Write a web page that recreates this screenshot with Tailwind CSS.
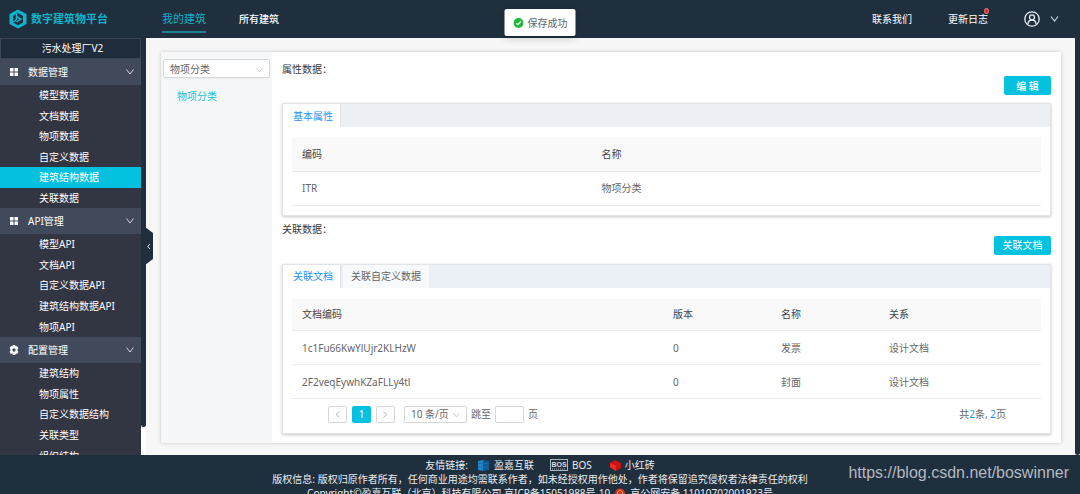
<!DOCTYPE html>
<html lang="zh-CN">
<head>
<meta charset="utf-8">
<meta name="viewport" content="width=device-width, initial-scale=1">
<title>数字建筑物平台</title>
<script src="https://cdn.jsdelivr.net/npm/@tailwindcss/browser@4"></script>
</head>
<body class="relative flex h-screen flex-col overflow-hidden bg-[#f7f7f8] font-['Noto_Sans','Noto_Sans_CJK_SC',sans-serif] text-[10px] leading-[14px] text-[#666]">

<header class="flex h-[38px] shrink-0 items-center bg-[#1f2f3e] text-white">
  <a href="#" class="flex w-[162px] items-center gap-1 pl-[9px] text-[11px] font-bold text-[#12b2cb]">
    <svg class="h-5 w-[18px]" viewBox="0 0 18 20" aria-hidden="true">
      <path d="M9 0.5 17.5 5v10L9 19.5 0.500 15V5Z" fill="#12b2cb"/>
      <path d="M9 4 14 7v6.500L9 16.300 4 13.500V7Z" fill="#1f2f3e"/>
      <path d="M7.500 4.500v6L4.500 13M7.500 7.500 12 10 7.500 13" fill="none" stroke="#12b2cb" stroke-width="1.500"/>
    </svg>
    <span class="whitespace-nowrap">数字建筑物平台</span>
  </a>
  <nav class="flex h-full items-center gap-[33px]">
    <a href="#" class="mt-[2px] flex h-[26px] items-center border-b-2 border-[#1c8196] text-[11px] text-[#18aec4]">我的建筑</a>
    <a href="#" class="font-medium">所有建筑</a>
  </nav>
  <div class="ml-auto flex items-center pr-[21px]">
    <a href="#">联系我们</a>
    <a href="#" class="relative ml-9">更新日志
      <span class="absolute -right-px -top-1 h-[6px] w-[5px] rounded-full border border-[#f2786f] bg-[#c2383a]"></span>
    </a>
    <button type="button" class="ml-9 flex items-center gap-[10px]" aria-label="用户菜单">
      <svg class="size-4" viewBox="0 0 16 16" fill="none" stroke="#e8edf2" stroke-width="1.300" aria-hidden="true">
        <circle cx="8" cy="8" r="7.200"/><circle cx="8" cy="6.300" r="2.500"/>
        <path d="M4 13c.2-2.500 1.700-4 4-4s3.800 1.500 4 4"/>
      </svg>
      <svg class="h-2 w-[9px]" viewBox="0 0 9 8" fill="none" stroke="#cfd6dc" stroke-width="1.200" aria-hidden="true"><path d="M1 1.500 4.500 6 8 1.500"/></svg>
    </button>
  </div>
</header>

<div class="flex min-h-0 flex-1">
  <aside class="relative flex w-[146px] shrink-0 bg-white">
    <div class="absolute bottom-7 right-0 top-0 w-[5px] rounded-b bg-[#1f2f3e]"></div>
    <div class="relative w-[141px] overflow-hidden bg-[#323643] text-white">
      <div class="flex h-[21px] items-center justify-center border border-[#3a4452] bg-[#1f2c3b] pb-[2px] pl-1">污水处理厂V2</div>

      <button type="button" class="flex h-[26px] w-full items-center bg-[#414a5b] pl-[10px] pr-[7px]">
        <svg class="mr-[10px] size-2" viewBox="0 0 8 8" fill="#fff" aria-hidden="true"><path d="M0 0h3.500v3.500H0zM4.500 0H8v3.500H4.500zM0 4.500h3.500V8H0zM4.500 4.500H8V8H4.500z"/></svg>
        数据管理
        <svg class="ml-auto h-2 w-2" viewBox="0 0 8 8" fill="none" stroke="#cfd6dc" aria-hidden="true"><path d="M.500 1.500 4 6 7.500 1.500"/></svg>
      </button>
      <ul class="grid h-[123px] auto-rows-fr">
        <li class="grid"><a href="#" class="flex items-center pl-[39px]">模型数据</a></li>
        <li class="grid"><a href="#" class="flex items-center pl-[39px]">文档数据</a></li>
        <li class="grid"><a href="#" class="flex items-center pl-[39px]">物项数据</a></li>
        <li class="grid"><a href="#" class="flex items-center pl-[39px]">自定义数据</a></li>
        <li class="grid"><a href="#" class="flex items-center bg-[#04c2df] pl-[39px]">建筑结构数据</a></li>
        <li class="grid"><a href="#" class="flex items-center pl-[39px]">关联数据</a></li>
      </ul>

      <button type="button" class="flex h-[26px] w-full items-center bg-[#414a5b] pl-[10px] pr-[7px]">
        <svg class="mr-[10px] size-2" viewBox="0 0 8 8" fill="#fff" aria-hidden="true"><path d="M0 0h3.500v3.500H0zM4.500 0H8v3.500H4.500zM0 4.500h3.500V8H0zM4.500 4.500H8V8H4.500z"/></svg>
        API管理
        <svg class="ml-auto h-2 w-2" viewBox="0 0 8 8" fill="none" stroke="#cfd6dc" aria-hidden="true"><path d="M.500 1.500 4 6 7.500 1.500"/></svg>
      </button>
      <ul class="grid h-[103px] auto-rows-fr">
        <li class="grid"><a href="#" class="flex items-center pl-[39px]">模型API</a></li>
        <li class="grid"><a href="#" class="flex items-center pl-[39px]">文档API</a></li>
        <li class="grid"><a href="#" class="flex items-center pl-[39px]">自定义数据API</a></li>
        <li class="grid"><a href="#" class="flex items-center pl-[39px]">建筑结构数据API</a></li>
        <li class="grid"><a href="#" class="flex items-center pl-[39px]">物项API</a></li>
      </ul>

      <button type="button" class="flex h-[26px] w-full items-center bg-[#414a5b] pl-[9px] pr-[7px]">
        <svg class="mr-[9px] size-[10px]" viewBox="0 0 10 10" aria-hidden="true">
          <path fill="#fff" fill-rule="evenodd" d="M3.800 0h2.400l.4 1.400 1.400-.4 1.400 2L8.600 4.200v1.600L9.400 7 8 9l-1.400-.4L6.200 10H3.800l-.4-1.400L2 9 .600 7l.8-1.200V4.200L.600 3 2 1l1.400.4ZM5 3.300a1.700 1.700 0 1 0 0 3.400 1.700 1.700 0 0 0 0-3.400Z"/>
        </svg>
        配置管理
        <svg class="ml-auto h-2 w-2" viewBox="0 0 8 8" fill="none" stroke="#cfd6dc" aria-hidden="true"><path d="M.500 1.500 4 6 7.500 1.500"/></svg>
      </button>
      <ul class="grid h-[103px] auto-rows-fr">
        <li class="grid"><a href="#" class="flex items-center pl-[39px]">建筑结构</a></li>
        <li class="grid"><a href="#" class="flex items-center pl-[39px]">物项属性</a></li>
        <li class="grid"><a href="#" class="flex items-center pl-[39px]">自定义数据结构</a></li>
        <li class="grid"><a href="#" class="flex items-center pl-[39px]">关联类型</a></li>
        <li class="grid"><a href="#" class="flex items-center pl-[39px]">组织结构</a></li>
      </ul>
    </div>
    <button type="button" aria-label="收起侧栏" class="absolute -right-[7px] top-[189px] h-[38px] w-[8px]">
      <svg class="h-[38px] w-[8px]" viewBox="0 0 8 38" aria-hidden="true"><path d="M0 0 8 6v26L0 38Z" fill="#1f2f3e"/><path d="M4.800 17 2.800 19.500l2 2.500" fill="none" stroke="#dfe5ea"/></svg>
    </button>
  </aside>

  <main class="flex min-w-0 flex-1 pb-3 pl-[15px] pr-[14px] pt-[14px]">
    <div class="flex min-w-0 flex-1 bg-white shadow-[0_0_4px_rgba(0,0,0,0.2)]">
      <section class="w-[111px] shrink-0 bg-[#f6f7f9] px-[2px] pt-[7px]">
        <div class="relative">
          <select aria-label="分类" class="block h-[19px] w-full appearance-none rounded-xs border border-[#d5d7da] bg-white pl-[6px] text-[10px] leading-[14px] shadow-xs"><option>物项分类</option></select>
          <svg class="pointer-events-none absolute right-[7px] top-[8px] h-[6px] w-[7px]" viewBox="0 0 7 6" fill="none" stroke="#ccc" aria-hidden="true"><path d="M.500 1 3.500 5 6.500 1"/></svg>
        </div>
        <a href="#" class="mt-[11px] block pl-[14px] text-[#17bdd6]">物项分类</a>
      </section>

      <section class="min-w-0 flex-1 pl-[10px] pr-[10px] pt-[10px]">
        <h2 class="text-[#33383f]">属性数据：</h2>
        <div class="flex justify-end">
          <button type="button" class="h-[19px] w-[47px] rounded-xs bg-[#04c2df] font-medium text-white">编 辑</button>
        </div>
        <div class="mt-2 border border-[#e2e4e8] bg-white pb-[9px] shadow-[0_1px_3px_rgba(0,0,0,0.22)]">
          <div class="flex h-[23px] bg-[#eceff4]">
            <button type="button" class="border-r border-[#dfe2e7] bg-white pl-[10px] pr-[7px] text-[#1f90ee]">基本属性</button>
          </div>
          <div class="px-[9px] pt-[10px]">
            <table class="w-full table-fixed text-left">
              <thead class="bg-[#f9f9fa] text-[#444]">
                <tr class="h-[34px] border-b border-[#e9ebee]"><th class="w-2/5 pl-[10px] font-normal">编码</th><th class="w-3/5 pl-[10px] font-normal">名称</th></tr>
              </thead>
              <tbody>
                <tr class="h-[34px] border-b border-[#e9ebee]"><td class="pl-[10px]">ITR</td><td class="pl-[10px]">物项分类</td></tr>
              </tbody>
            </table>
          </div>
        </div>

        <h2 class="mt-[6px] text-[#33383f]">关联数据：</h2>
        <div class="flex justify-end">
          <button type="button" class="h-[19px] w-[57px] rounded-xs bg-[#04c2df] text-white">关联文档</button>
        </div>
        <div class="mt-[9px] border border-[#e2e4e8] bg-white shadow-[0_1px_3px_rgba(0,0,0,0.22)]">
          <div class="flex h-[23px] gap-[2px] bg-[#ebeff6]">
            <button type="button" class="border-r border-[#dfe2e7] bg-white pl-[10px] pr-[7px] text-[#1f90ee]">关联文档</button>
            <button type="button" class="bg-[#f8f9fb] px-[8px]">关联自定义数据</button>
          </div>
          <div class="px-[9px] pt-[11px]">
            <table class="w-full table-fixed text-left">
              <colgroup><col><col class="w-[108px]"><col class="w-[108px]"><col class="w-[162px]"></colgroup>
              <thead class="bg-[#f9f9fa] text-[#444]">
                <tr class="h-[32px] border-b border-[#e9ebee]"><th class="pl-[10px] font-normal">文档编码</th><th class="pl-[10px] font-normal">版本</th><th class="pl-[10px] font-normal">名称</th><th class="pl-[10px] font-normal">关系</th></tr>
              </thead>
              <tbody>
                <tr class="h-[34px] border-b border-[#e9ebee]"><td class="pl-[10px]">1c1Fu66KwYlUjr2KLHzW</td><td class="pl-[10px]">0</td><td class="pl-[10px]">发票</td><td class="pl-[10px]">设计文档</td></tr>
                <tr class="h-[34px] border-b border-[#e9ebee]"><td class="pl-[10px]">2F2veqEywhKZaFLLy4tl</td><td class="pl-[10px]">0</td><td class="pl-[10px]">封面</td><td class="pl-[10px]">设计文档</td></tr>
              </tbody>
            </table>
            <div class="flex h-[34px] items-center pb-1 pl-9 pr-[35px]">
              <button type="button" aria-label="上一页" class="flex h-[17px] w-[19px] items-center justify-center rounded-xs border border-[#d5d7da]"><svg class="h-[7px] w-[5px]" viewBox="0 0 5 7" fill="none" stroke="#bbb" aria-hidden="true"><path d="M4.500 .500 1 3.500 4.500 6.500"/></svg></button>
              <button type="button" class="ml-[5px] h-[17px] w-[19px] rounded-xs bg-[#04c2df] text-white">1</button>
              <button type="button" aria-label="下一页" class="ml-[5px] flex h-[17px] w-[19px] items-center justify-center rounded-xs border border-[#d5d7da]"><svg class="h-[7px] w-[5px]" viewBox="0 0 5 7" fill="none" stroke="#bbb" aria-hidden="true"><path d="M.500 .500 4 3.500 .500 6.500"/></svg></button>
              <div class="relative ml-[9px]">
                <select aria-label="每页条数" class="block h-[17px] w-[63px] appearance-none rounded-xs border border-[#d5d7da] bg-white pl-[6px] text-[10px] leading-[14px]"><option>10 条/页</option></select>
                <svg class="pointer-events-none absolute right-[7px] top-[6px] h-[6px] w-[7px]" viewBox="0 0 7 6" fill="none" stroke="#ccc" aria-hidden="true"><path d="M.500 1 3.500 5 6.500 1"/></svg>
              </div>
              <label for="jump" class="ml-1">跳至</label>
              <input id="jump" type="text" class="mx-1 h-[17px] w-[29px] rounded-xs border border-[#d5d7da] bg-white px-1">
              <span>页</span>
              <span class="ml-auto">共<span class="text-[#1f90ee]">2</span>条, <span class="text-[#1f90ee]">2</span>页</span>
            </div>
          </div>
        </div>
      </section>
    </div>
  </main>
  <div class="w-[5px] shrink-0 rounded-b bg-[#1f2f3e]"></div>
</div>

<footer class="h-[39px] shrink-0 overflow-hidden bg-[#1f2f3e] pt-[3px] text-center whitespace-nowrap text-[#e9edf0]">
  <div class="flex items-center justify-center">
    <span>友情链接:</span>
    <a href="#" class="ml-[10px] flex items-center gap-[5px]">
      <svg class="h-[11px] w-[11px]" viewBox="0 0 11 11" aria-hidden="true"><path d="M0 1 5.500 0v11L0 10Z" fill="#1f86c9"/><path d="M5.500 0 11 1v9l-5.500 1Z" fill="#12588f"/><path d="M0 3.500h11M0 7h11" stroke="#1a6cab"/></svg>盈嘉互联</a>
    <a href="#" class="ml-4 flex items-center gap-1">
      <svg class="h-3 w-[18px]" viewBox="0 0 18 12" aria-hidden="true"><rect x=".5" y=".5" width="17" height="11" fill="none" stroke="#aeb6bd"/><text x="9" y="8" text-anchor="middle" font-family="Liberation Sans" font-size="7" font-weight="bold" fill="#d9dee2">BOS</text><path d="M2 10h14" stroke="#aeb6bd" stroke-dasharray="1 1"/></svg>BOS</a>
    <a href="#" class="ml-[18px] flex items-center gap-1">
      <svg class="h-[11px] w-[11px]" viewBox="0 0 11 11" aria-hidden="true"><path d="M0 3 5 0l6 3v5l-5 3-6-4Z" fill="#c91414"/><path d="M0 3 6 5.500V11L0 7Z" fill="#ee2b20"/></svg>小红砖</a>
  </div>
  <p>版权信息: 版权归原作者所有，任何商业用途均需联系作者，如未经授权用作他处，作者将保留追究侵权者法律责任的权利</p>
  <p class="flex items-center justify-center">Copyright©盈嘉互联（北京）科技有限公司 京ICP备15051988号-10
    <svg class="mx-[5px] h-[11px] w-[10px]" viewBox="0 0 10 11" aria-hidden="true"><circle cx="5" cy="5.500" r="5" fill="#d8362a"/><path d="M5 2 7.500 4v2.500L5 9 2.500 6.500V4Z" fill="none" stroke="#f3a14b"/></svg>
    京公网安备 11010702001923号</p>
</footer>

<div role="status" class="absolute left-1/2 top-[9px] flex h-[27px] w-[71px] -translate-x-1/2 items-center gap-1 rounded-xs bg-white pl-[9px] whitespace-nowrap shadow-[0_2px_8px_rgba(0,0,0,0.2)]">
  <svg class="size-[10px] shrink-0" viewBox="0 0 10 10" aria-hidden="true"><circle cx="5" cy="5" r="5" fill="#1fb838"/><path d="M2.800 5.200 4.400 6.700 7.200 3.500" fill="none" stroke="#fff" stroke-width="1.200"/></svg>
  保存成功
</div>
<div class="pointer-events-none absolute bottom-[11px] right-[11px] font-['Liberation_Sans',sans-serif] text-[16px] leading-[20px] text-[#b4bac0]">https://blog.csdn.net/boswinner</div>
</body>
</html>
